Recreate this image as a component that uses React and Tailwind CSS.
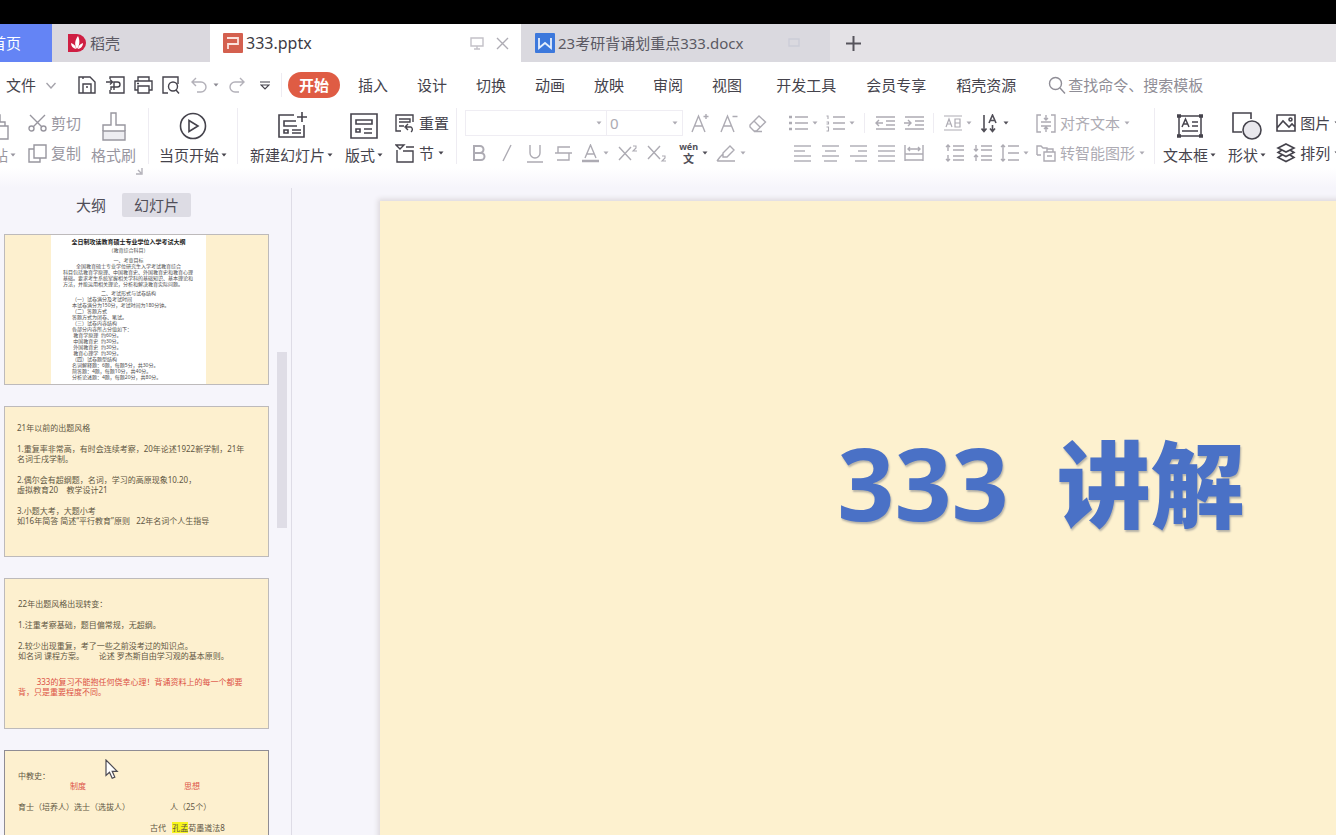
const menuItems = ['插入', '设计', '切换', '动画', '放映', '审阅', '视图'];
const extraItems = ['开发工具', '会员专享', '稻壳资源'];

function Svg({ w, h, className = '', sw = 1.4, children }) {
  return (
    <svg width={w} height={h} viewBox={`0 0 ${w} ${h}`} fill="none" stroke="currentColor" strokeWidth={sw} className={`shrink-0 ${className}`} aria-hidden="true">
      {children}
    </svg>
  );
}

function Caret() {
  return (
    <svg width="6" height="4" viewBox="0 0 6 4" className="shrink-0" aria-hidden="true">
      <path d="M0.5 0.5h5L3 3.5z" fill="currentColor" />
    </svg>
  );
}

function Divider({ className = '' }) {
  return <span className={`w-px bg-[#eeecf2] shrink-0 ${className}`} />;
}

function IconButton({ label, className = 'w-7', caret, children }) {
  return (
    <button aria-label={label} className={`h-full flex items-center justify-center gap-1 shrink-0 ${className}`}>
      {children}
      {caret && <Caret />}
    </button>
  );
}

function BigButton({ label, caret, className = '', children }) {
  return (
    <button className={`flex flex-col items-center shrink-0 ${className}`}>
      <span className="h-9 flex items-center">{children}</span>
      <span className="h-[22px] flex items-center gap-[2px] whitespace-nowrap">
        {label}
        {caret && <Caret />}
      </span>
    </button>
  );
}

function RowButton({ label, caret, children }) {
  return (
    <button className="h-[30px] flex items-center gap-1 whitespace-nowrap">
      {children}
      <span>{label}</span>
      {caret && <Caret />}
    </button>
  );
}

function Lines({ rows }) {
  return (
    <Svg w={19} h={18}>
      {rows.map(([a, b], i) => (
        <path key={i} d={`M${a} ${2 + i * 5}H${b}`} />
      ))}
    </Svg>
  );
}

function TabBar() {
  return (
    <div className="h-[38px] shrink-0 flex bg-[#e4e2e6] overflow-hidden text-[15px] text-[#5b5963]">
      <button className="-ml-10 w-[92px] shrink-0 bg-[#6484f5] text-white">首页</button>
      <button className="w-[158px] shrink-0 bg-[#dad8de] flex items-center gap-[3px] pl-[15px]">
        <svg width="20" height="20" viewBox="0 0 20 20" aria-hidden="true">
          <path d="M1 1h9a9 9 0 0 1 0 18H1z" fill="#cf1f43" />
          <path d="M10 16C7 12 8 7 11 3c2 4 2 9-1 13zM9 16c-3-.5-5-3-5-6 3 1 5 3 5 6zM11 16c0-3 2-5 5-6 0 3-2 5.500-5 6z" fill="#fff" />
        </svg>
        稻壳
      </button>
      <div className="w-[311px] shrink-0 bg-white flex items-center pl-[13px] pr-3 text-[16px] text-[#3d3b44]">
        <svg width="20" height="20" viewBox="0 0 20 20" className="mr-[3px]" aria-hidden="true">
          <rect width="20" height="20" rx="1" fill="#d4604f" />
          <path d="M5 16V11h10V5H4" fill="none" stroke="#fbe3de" strokeWidth="1.800" />
        </svg>
        <span className="flex-1">333.pptx</span>
        <button aria-label="演示" className="mr-3 text-[#c3c1c8]">
          <Svg w={14} h={14}><path d="M1 2h12v8H1zM7 10v3M4 13h6" /></Svg>
        </button>
        <button aria-label="关闭" className="text-[#aeacb4]">
          <Svg w={13} h={13}><path d="M1 1l11 11M12 1L1 12" /></Svg>
        </button>
      </div>
      <button className="w-[309px] shrink-0 bg-[#dad9df] flex items-center pl-[14px]">
        <svg width="20" height="20" viewBox="0 0 20 20" className="mr-[3px]" aria-hidden="true">
          <rect width="20" height="20" rx="1" fill="#3c78dc" />
          <path d="M4 5v10l6-5 6 5V5" fill="none" stroke="#e4eefc" strokeWidth="1.800" />
        </svg>
        <span className="whitespace-nowrap w-[230px] text-left">23考研背诵划重点333.docx</span>
        <Svg w={12} h={12} className="text-[#cccdd7]"><path d="M1 2h10v7H1z" /></Svg>
      </button>
      <button aria-label="新建标签" className="ml-4 text-[#56545c]">
        <Svg w={15} h={15} sw={2}><path d="M7.500 0v15M0 7.500h15" /></Svg>
      </button>
    </div>
  );
}

function MenuBar() {
  return (
    <div className="h-[46px] shrink-0 flex items-center bg-white pl-[6px] text-[15px] text-[#45434c] whitespace-nowrap">
      <button className="flex items-center gap-[10px] mr-[17px]">
        文件
        <Svg w={10} h={7} className="text-[#a5a3ab]"><path d="M0.500 1L5 6l4.500-5" /></Svg>
      </button>
      <IconButton label="保存">
        <Svg w={18} h={18}><path d="M1 1h11l5 5v11H1zM5 17V8h8v9M8 11h2M5 1v2" /></Svg>
      </IconButton>
      <IconButton label="输出为PDF">
        <Svg w={19} h={18}><path d="M4 3V1h14v16H4v-3M0 6h6M4 3.500L6.500 6 4 8.500M8 14V6h3.500a2.500 2.500 0 0 1 0 5H5v3" /></Svg>
      </IconButton>
      <IconButton label="打印">
        <Svg w={19} h={18}><path d="M4 5V1h11v4M4 14H1V5h17v9h-3M4 10h11v7H4zM3 7.500h2" /></Svg>
      </IconButton>
      <IconButton label="打印预览">
        <Svg w={18} h={18}><path d="M6 17H1V1h15v7M14 14l3 3.500" /><circle cx="11" cy="10.500" r="4.500" /></Svg>
      </IconButton>
      <IconButton label="撤销" className="w-7 text-[#b3b1b9]">
        <Svg w={16} h={17}><path d="M5 1L1 5l4 4M1 5h9a5 5 0 0 1 0 10H6" /></Svg>
      </IconButton>
      <button aria-label="撤销列表" className="w-[10px] text-[#8b8992]"><Caret /></button>
      <IconButton label="重做" className="w-7 text-[#b3b1b9]">
        <Svg w={16} h={17}><path d="M11 1l4 4-4 4M15 5H6a5 5 0 0 0 0 10h4" /></Svg>
      </IconButton>
      <IconButton label="自定义工具栏">
        <Svg w={10} h={9} sw={1.2}><path d="M0 1h10M1 4h8L5 8z" /></Svg>
      </IconButton>
      <Divider className="h-6 ml-[2px]" />
      <button className="ml-[6px] w-[52px] h-[26px] rounded-full bg-[#df5c44] text-white font-bold">开始</button>
      <nav className="flex gap-[29px] ml-[18px]">
        {menuItems.map((m) => <button key={m}>{m}</button>)}
      </nav>
      <nav className="flex gap-[30px] ml-[34px]">
        {extraItems.map((m) => <button key={m}>{m}</button>)}
      </nav>
      <label className="flex items-center gap-[2px] ml-8 text-[#8f8d96]">
        <Svg w={18} h={18}><circle cx="7.500" cy="7.500" r="6" /><path d="M12 12l5 5.500" /></Svg>
        <input aria-label="搜索" placeholder="查找命令、搜索模板" className="w-40 outline-none placeholder:text-[#8f8d96]" />
      </label>
    </div>
  );
}

function FontGroup() {
  return (
    <div className="ml-2 w-[308px] shrink-0 text-[#adabb3]">
      <div className="h-[30px] flex items-center">
        <div className="w-[142px] h-[26px] border border-[#efedf3] flex items-center pr-1">
          <select aria-label="字体" className="flex-1 appearance-none outline-none"><option></option></select>
          <Caret />
        </div>
        <div className="w-[76px] h-[26px] border border-l-0 border-[#efedf3] flex items-center pl-[3px] pr-1">
          <select aria-label="字号" className="flex-1 appearance-none outline-none"><option>0</option></select>
          <Caret />
        </div>
        <span className="w-[2px]" />
        <IconButton label="增大字号" className="w-[29px]">
          <Svg w={18} h={20}><path d="M1 19L7.500 3 14 19M3.500 13h8M15 1v5M12.500 3.500h5" /></Svg>
        </IconButton>
        <IconButton label="减小字号" className="w-[29px]">
          <Svg w={18} h={20}><path d="M1 19L7.500 3 14 19M3.500 13h8M12.500 3.500h5" /></Svg>
        </IconButton>
        <IconButton label="清除格式" className="w-[29px]">
          <Svg w={19} h={19}><path d="M2 11L11 2l6.500 6-9 9H6l-4-4zM6 7l6.500 6.500M6 17.500h8" /></Svg>
        </IconButton>
      </div>
      <div className="h-[30px] flex items-center text-[19px]">
        <IconButton label="加粗">
          <Svg w={14} h={18} sw={2}><path d="M2 2h6a3.500 3.500 0 0 1 0 7H2zM2 9h7a3.500 3.500 0 0 1 0 7H2z" /></Svg>
        </IconButton>
        <IconButton label="倾斜"><Svg w={10} h={18}><path d="M9 1L1 17" /></Svg></IconButton>
        <IconButton label="下划线"><Svg w={16} h={19}><path d="M3 1v8a5 5 0 0 0 10 0V1M0 18h16" /></Svg></IconButton>
        <IconButton label="删除线"><Svg w={17} h={17}><path d="M15 2H3v6h11v7H2M0 8h17" /></Svg></IconButton>
        <IconButton label="字体颜色" caret className="w-9">
          <Svg w={17} h={19}><path d="M3 14L8.500 1 14 14M5 10h7" /><path d="M0 17h17" strokeWidth="2.500" /></Svg>
        </IconButton>
        <IconButton label="上标" className="w-[29px]">
          <Svg w={20} h={18}><path d="M1 3l12 13M13 3L1 16" /><path d="M15 2h3v2l-3 3h4" strokeWidth="1.1" /></Svg>
        </IconButton>
        <IconButton label="下标" className="w-[29px]">
          <Svg w={20} h={18}><path d="M1 2l12 13M13 2L1 15" /><path d="M15 12h3v2l-3 3h4" strokeWidth="1.1" /></Svg>
        </IconButton>
        <IconButton label="拼音指南" caret className="w-[45px] text-[#514f58]">
          <span className="flex flex-col items-center text-[9px] leading-[11px] font-bold">
            <span>wén</span>
            <span className="text-[11px] leading-[14px]">文</span>
          </span>
        </IconButton>
        <IconButton label="突出显示" caret className="w-[30px]">
          <Svg w={20} h={19}><path d="M7 9l7-7 4 4-7 7H7zM4 13l3-3M1 17h18M1 17l3-4" /></Svg>
        </IconButton>
      </div>
    </div>
  );
}

function ParagraphGroup() {
  return (
    <div className="ml-3 w-[247px] shrink-0 text-[#adabb3]">
      <div className="h-[30px] flex items-center">
        <IconButton label="项目符号" caret className="w-[37px]">
          <Svg w={19} h={18}><path d="M6 3h13M6 9h13M6 15h13" /><path d="M0 3h3M0 9h3M0 15h3" strokeWidth="2.500" /></Svg>
        </IconButton>
        <IconButton label="编号" caret className="w-[37px]">
          <Svg w={19} h={18}><path d="M7 3h12M7 9h12M7 15h12" /><path d="M0.500 2H2v3M0.500 8h2v2h-2M0.500 13h2v4h-2" strokeWidth="1.1" /></Svg>
        </IconButton>
        <Divider className="h-5 mx-[5px]" />
        <IconButton label="减少缩进" className="w-[29px]">
          <Svg w={20} h={16}><path d="M1 2h19M11 6h9M11 10h9M1 14h19M8 8H1M4 5L1 8l3 3" /></Svg>
        </IconButton>
        <IconButton label="增加缩进" className="w-[29px]">
          <Svg w={20} h={16}><path d="M1 2h19M11 6h9M11 10h9M1 14h19M0 8h7M4 5l3 3-3 3" /></Svg>
        </IconButton>
        <Divider className="h-5 mx-[5px]" />
        <IconButton label="分散对齐" caret className="w-[37px]">
          <Svg w={18} h={18} sw={1.200}><path d="M0 2h18M0 16h18M2 13l3-8 3 8M3 10h4M11 5h5v8h-5zM11 9h5" /></Svg>
        </IconButton>
        <IconButton label="文字方向" caret className="w-[37px] text-[#514f58]">
          <Svg w={18} h={19} sw={1.600}><path d="M3 1v16M0.500 14.500L3 17.500l2.500-3M8 9l3.500-8L15 9M9 6.500h5M11.500 11v6M9 14.500l2.500 3 2.500-3" /></Svg>
        </IconButton>
      </div>
      <div className="h-[30px] flex items-center pl-[3px]">
        <IconButton label="左对齐"><Lines rows={[[1, 18], [1, 12], [1, 18], [1, 18]]} /></IconButton>
        <IconButton label="居中"><Lines rows={[[1, 18], [4, 15], [1, 18], [3, 16]]} /></IconButton>
        <IconButton label="右对齐"><Lines rows={[[1, 18], [9, 18], [1, 18], [6, 18]]} /></IconButton>
        <IconButton label="两端对齐"><Lines rows={[[1, 18], [1, 18], [1, 18], [1, 18]]} /></IconButton>
        <IconButton label="分布对齐">
          <Svg w={20} h={17}><path d="M1 0v16M19 0v16M1 9h18M1 15h18M4 4h12M6 2L4 4l2 2M14 2l2 2-2 2" /></Svg>
        </IconButton>
        <span className="w-3" />
        <IconButton label="增加段距">
          <Svg w={19} h={18}><path d="M8 2h11M8 6h11M8 12h11M8 16h11M3 7V1M1 3l2-2 2 2M3 11v6M1 15l2 2 2-2" /></Svg>
        </IconButton>
        <IconButton label="减少段距">
          <Svg w={19} h={18}><path d="M8 2h11M8 6h11M8 12h11M8 16h11M3 1v6M1 5l2 2 2-2M3 17v-6M1 13l2-2 2 2" /></Svg>
        </IconButton>
        <IconButton label="行距" caret className="w-9">
          <Svg w={19} h={18}><path d="M8 2h11M8 9h11M8 16h11M3 1v16M1 3l2-2 2 2M1 15l2 2 2-2" /></Svg>
        </IconButton>
      </div>
    </div>
  );
}

function Ribbon() {
  return (
    <div className="h-20 shrink-0 flex overflow-hidden bg-linear-to-b from-white from-75% to-[#f6f5fb] text-[15px] text-[#45434c]">
      <BigButton label="粘贴" caret className="-ml-[22px] text-[#98969f]">
        <Svg w={24} h={28}><path d="M1 14h22v13H1zM4 14v-4h5V3h6v7h5v4" /></Svg>
      </BigButton>
      <div className="ml-3 text-[#98969f]">
        <RowButton label="剪切">
          <Svg w={19} h={18}><path d="M2 1l12 12M17 1L5 13" /><circle cx="3.500" cy="14.500" r="2.500" /><circle cx="15.500" cy="14.500" r="2.500" /></Svg>
        </RowButton>
        <RowButton label="复制">
          <Svg w={19} h={19}><path d="M6 1h12v13H6zM6 5H1v13h11v-4" /></Svg>
        </RowButton>
      </div>
      <BigButton label="格式刷" className="ml-[10px] text-[#98969f]">
        <Svg w={24} h={29}>
          <path d="M1 19h22v9H1z" fill="#ededf1" />
          <path d="M1 19v-6h8V1h5v12h9v6" />
        </Svg>
      </BigButton>
      <button aria-label="剪贴板选项" className="self-end mb-[13px] text-[#b3b1b9]">
        <Svg w={7} h={7}><path d="M6 0v6H0M2 2l3 3" /></Svg>
      </button>
      <Divider className="h-14 ml-[5px]" />
      <BigButton label="当页开始" caret className="ml-[10px]">
        <Svg w={28} h={28} sw={1.600}><circle cx="14" cy="14" r="12.500" /><path d="M10 8.500v11l9-5.500z" /></Svg>
      </BigButton>
      <Divider className="h-14 ml-[10px]" />
      <BigButton label="新建幻灯片" caret className="ml-3">
        <Svg w={30} h={28} sw={1.600}><path d="M17 3H2v22h25V13M25 0v10M20 5h10M19 9H7v5h13M15 18h9M15 21h9M7 18h4v3H7z" /></Svg>
      </BigButton>
      <BigButton label="版式" caret className="ml-3">
        <Svg w={28} h={26} sw={1.600}><path d="M1 1h26v24H1zM6 7h16v4H6zM6 16h4v3H6zM14 16h8M14 20h8" /></Svg>
      </BigButton>
      <div className="ml-3 w-[53px] shrink-0">
        <RowButton label="重置">
          <Svg w={20} h={19}><path d="M6 17H1V1h17v7M4 5h11v3H4M4 12h5M11 13h5a3 3 0 0 1 0 5M13 10l-3 3 3 3" /></Svg>
        </RowButton>
        <RowButton label="节" caret>
          <Svg w={20} h={19}><path d="M1 1h8L5 5zM11 3h8M2 6v12h16V7H8" /></Svg>
        </RowButton>
      </div>
      <Divider className="h-14 ml-2" />
      <FontGroup />
      <ParagraphGroup />
      <div className="ml-1 w-[110px] shrink-0 text-[#adabb3]">
        <RowButton label="对齐文本" caret>
          <Svg w={20} h={19}><path d="M5 1H1v17h4M15 1h4v17h-4M5 8h10M5 12h10M10 1v5M8 4l2 2 2-2M10 18v-4M8 15l2-2 2 2" /></Svg>
        </RowButton>
        <RowButton label="转智能图形" caret>
          <Svg w={20} h={19}><path d="M1 11V2h4l2 2h4v4M1 11h4M8 8h11v9H8zM11 12h5M11 5h6v3" /></Svg>
        </RowButton>
      </div>
      <Divider className="h-14 ml-2" />
      <BigButton label="文本框" caret className="ml-2">
        <Svg w={28} h={26} sw={1.500}>
          <path d="M3 3h22v20H3z" />
          <path d="M1 3h4M23 3h4M1 23h4M23 23h4" strokeWidth="3.5" />
          <path d="M6 14l3.500-8 3.500 8M7.500 11h4M16 9h6M16 13h6M6 18h16" />
        </Svg>
      </BigButton>
      <BigButton label="形状" caret className="ml-3">
        <Svg w={30} h={28} sw={1.600}><path d="M10 20H1V1h18v6" /><circle cx="20" cy="18" r="9" fill="#e9e8ed" /></Svg>
      </BigButton>
      <div className="ml-[10px]">
        <RowButton label="图片" caret>
          <Svg w={20} h={18} sw={1.600}><path d="M1 1h18v16H1zM1 14l6-7 6 6 3-3 3 3" /><circle cx="14.500" cy="5.500" r="1.500" /></Svg>
        </RowButton>
        <RowButton label="排列" caret>
          <Svg w={20} h={20} sw={1.600}><path d="M10 1l8 4-8 4-8-4zM6 7l-4 2.500 8 4 8-4L14 7M6 12l-4 2.500 8 4 8-4-4-2.500" /></Svg>
        </RowButton>
      </div>
    </div>
  );
}

function Thumb({ className = 'border-[#bdbabb]', children }) {
  return (
    <li className={`h-[151px] shrink-0 border bg-[#fdf0cf] overflow-hidden whitespace-pre text-[8px] leading-[10px] text-[#5f5743] ${className}`}>
      {children}
    </li>
  );
}

function Sidebar() {
  return (
    <aside className="relative w-[292px] shrink-0 border-r border-[#dedce6] flex flex-col overflow-hidden">
      <div className="flex items-center pt-[5px] pl-[60px] text-[15px] text-[#504e58]">
        <button className="w-[62px] h-6">大纲</button>
        <button className="w-[69px] h-6 rounded-xs bg-[#dddce4]">幻灯片</button>
      </div>
      <ul className="mt-[17px] ml-1 w-[265px] flex flex-col gap-[21px]">
        <Thumb>
          <div className="ml-[46px] w-[155px] h-full bg-white px-3 pt-[3px] text-[5px] leading-[6px] text-[#4c4c4c]">
            <p className="text-center -mx-3 text-[6px] leading-[8px] font-bold text-[#222]">全日制攻读教育硕士专业学位入学考试大纲</p>
            <p className="text-center leading-[8px]">（教育综合科目）</p>
            <p className="text-center mt-[3px]">一、考查目标</p>
            <p>{'          全国教育硕士专业学位研究生入学考试教育综合'}</p>
            <p>科目包括教育学原理、中国教育史、外国教育史和教育心理</p>
            <p>基础。要求考生系统掌握相关学科的基础知识、基本理论和</p>
            <p>方法，并能运用相关理论，分析和解决教育实际问题。</p>
            <p className="text-center mt-[3px]">二、考试形式与试卷结构</p>
            <div className="pl-[9px]">
              <p>（一）试卷满分及考试时间</p>
              <p>本试卷满分为150分，考试时间为180分钟。</p>
              <p>（二）答题方式</p>
              <p>答题方式为闭卷、笔试。</p>
              <p>（三）试卷内容结构</p>
              <p>各部分内容所占分值如下：</p>
              <p> 教育学原理  约60分。</p>
              <p> 中国教育史  约30分。</p>
              <p> 外国教育史  约30分。</p>
              <p> 教育心理学  约30分。</p>
              <p>（四）试卷题型结构</p>
              <p>名词解释题：6题，每题5分，共30分。</p>
              <p>简答题：4题，每题10分，共40分。</p>
              <p>分析论述题：4题，每题20分，共80分。</p>
            </div>
          </div>
        </Thumb>
        <Thumb className="px-3 pt-4 border-[#bdbabb]">
          <p>21年以前的出题风格</p>
          <p className="mt-[11px]">1.重复率非常高，有时会连续考察，20年论述1922新学制，21年</p>
          <p>名词壬戌学制。</p>
          <p className="mt-[11px]">2.偶尔会有超纲题，名词，学习的高原现象10.20，</p>
          <p>虚拟教育20    教学设计21</p>
          <p className="mt-[11px]">3.小题大考，大题小考</p>
          <p>如16年简答 简述“平行教育”原则   22年名词个人生指导</p>
        </Thumb>
        <Thumb className="px-[13px] pt-5 border-[#bdbabb]">
          <p>22年出题风格出现转变：</p>
          <p className="mt-[11px]">1.注重考察基础，题目偏常规，无超纲。</p>
          <p className="mt-[11px]">2.较少出现重复，考了一些之前没考过的知识点。</p>
          <p>如名词 课程方案。       论述 罗杰斯自由学习观的基本原则。</p>
          <p className="mt-4 text-[#dc5144]">{'         333的复习不能抱任何侥幸心理！背诵资料上的每一个都要'}</p>
          <p className="text-[#dc5144]">背，只是重要程度不同。</p>
        </Thumb>
        <Thumb className="px-[13px] pt-5 border-[#8f8c94]">
          <p>中教史：</p>
          <p className="flex pl-[52px] text-[#dc5144]"><span className="w-[114px]">制度</span>思想</p>
          <p className="flex mt-[11px]"><span className="w-[152px]">育士（培养人）选士（选拔人）</span>人（25个）</p>
          <p className="mt-[11px] pl-[132px]">古代   <mark className="bg-[#f6f61c] text-[#5f5743]">孔孟</mark>荀墨道法8</p>
        </Thumb>
      </ul>
      <span className="absolute right-1 top-[164px] w-[10px] h-[176px] bg-[#dfdde6]" />
      <svg width="14" height="21" viewBox="0 0 14 21" className="absolute left-[105px] top-[571px]" aria-hidden="true">
        <path d="M1 1v15.500l3.500-3.200 2.700 6 2.600-1.200-2.600-5.800h5z" fill="#fff" stroke="#4c4a52" strokeWidth="1.200" />
      </svg>
    </aside>
  );
}

export default function App() {
  return (
    <div className="h-screen flex flex-col overflow-hidden bg-[#f6f5fb] font-['Noto_Sans','Noto_Sans_CJK_SC',sans-serif]">
      <div className="h-6 shrink-0 bg-black" />
      <TabBar />
      <MenuBar />
      <Ribbon />
      <div className="flex-1 min-h-0 flex">
        <Sidebar />
        <main className="flex-1 min-w-0 overflow-hidden pl-[88px] pt-[13px]">
          <section className="w-[1322px] h-[743px] bg-[#fdf1cf] shadow-[0_0_5px_2px_#dcd8dc] flex justify-center">
            <h1 className="mt-56 h-[110px] flex items-baseline gap-12 font-bold text-[#4a71c6] leading-[110px] text-shadow-[1px_2px_2px_#b5b2a8]">
              <span className="font-['Open_Sans',sans-serif] text-[100px]">333</span>
              <span className="font-['Noto_Sans_CJK_SC',sans-serif] font-black text-[94px]">讲解</span>
            </h1>
          </section>
        </main>
      </div>
    </div>
  );
}
